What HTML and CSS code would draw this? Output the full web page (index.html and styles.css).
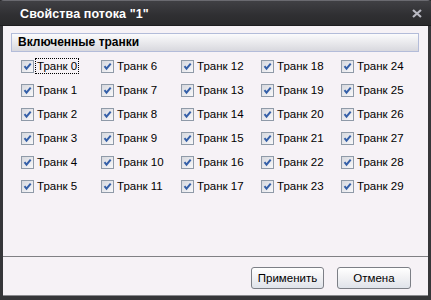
FILE: index.html
```html
<!DOCTYPE html>
<html>
<head>
<meta charset="utf-8">
<link rel="stylesheet" href="styles.css">
</head>
<body>
<div class="window">
  <div class="titlebar">
    <span class="title">Свойства потока "1"</span>
    <svg class="close" width="10" height="9" viewBox="0 0 10 9"><path d="M1 1 L9 8 M9 1 L1 8" stroke="#b9b9c2" stroke-width="2.2" fill="none"/></svg>
  </div>
  <div class="client">
    <div class="group-header">Включенные транки</div>
    <div class="grid">
      <label class="item"><span class="cb"></span><span class="lbl focus">Транк 0</span></label>
      <label class="item"><span class="cb"></span><span class="lbl">Транк 1</span></label>
      <label class="item"><span class="cb"></span><span class="lbl">Транк 2</span></label>
      <label class="item"><span class="cb"></span><span class="lbl">Транк 3</span></label>
      <label class="item"><span class="cb"></span><span class="lbl">Транк 4</span></label>
      <label class="item"><span class="cb"></span><span class="lbl">Транк 5</span></label>
      <label class="item"><span class="cb"></span><span class="lbl">Транк 6</span></label>
      <label class="item"><span class="cb"></span><span class="lbl">Транк 7</span></label>
      <label class="item"><span class="cb"></span><span class="lbl">Транк 8</span></label>
      <label class="item"><span class="cb"></span><span class="lbl">Транк 9</span></label>
      <label class="item"><span class="cb"></span><span class="lbl">Транк 10</span></label>
      <label class="item"><span class="cb"></span><span class="lbl">Транк 11</span></label>
      <label class="item"><span class="cb"></span><span class="lbl">Транк 12</span></label>
      <label class="item"><span class="cb"></span><span class="lbl">Транк 13</span></label>
      <label class="item"><span class="cb"></span><span class="lbl">Транк 14</span></label>
      <label class="item"><span class="cb"></span><span class="lbl">Транк 15</span></label>
      <label class="item"><span class="cb"></span><span class="lbl">Транк 16</span></label>
      <label class="item"><span class="cb"></span><span class="lbl">Транк 17</span></label>
      <label class="item"><span class="cb"></span><span class="lbl">Транк 18</span></label>
      <label class="item"><span class="cb"></span><span class="lbl">Транк 19</span></label>
      <label class="item"><span class="cb"></span><span class="lbl">Транк 20</span></label>
      <label class="item"><span class="cb"></span><span class="lbl">Транк 21</span></label>
      <label class="item"><span class="cb"></span><span class="lbl">Транк 22</span></label>
      <label class="item"><span class="cb"></span><span class="lbl">Транк 23</span></label>
      <label class="item"><span class="cb"></span><span class="lbl">Транк 24</span></label>
      <label class="item"><span class="cb"></span><span class="lbl">Транк 25</span></label>
      <label class="item"><span class="cb"></span><span class="lbl">Транк 26</span></label>
      <label class="item"><span class="cb"></span><span class="lbl">Транк 27</span></label>
      <label class="item"><span class="cb"></span><span class="lbl">Транк 28</span></label>
      <label class="item"><span class="cb"></span><span class="lbl">Транк 29</span></label>
    </div>
    <div class="spacer"></div>
    <div class="footer">
      <button class="btn btn-apply">Применить</button>
      <button class="btn btn-cancel">Отмена</button>
    </div>
  </div>
</div>
</body>
</html>
```

FILE: styles.css
```css
html, body {
  margin: 0;
  padding: 0;
  background: #2c2c2e;
}
.window {
  width: 431px;
  height: 300px;
  box-sizing: border-box;
  display: flex;
  flex-direction: column;
  background: #363639;
  border-radius: 4px 4px 0 0;
  border-top: 1px solid #6a6a70;
  font-family: "Liberation Sans", Arial, sans-serif;
  font-size: 11.5px;
  color: #000;
}
.titlebar {
  height: 25px;
  display: flex;
  align-items: center;
  justify-content: space-between;
  padding: 0 9px 0 20px;
  background: linear-gradient(#404044, #2f2f32 60%, #2a2a2c);
  border-bottom: 1px solid #1e1e20;
  box-sizing: border-box;
}
.title {
  color: #fff;
  font-size: 12.5px;
  font-weight: bold;
  letter-spacing: 0.1px;
  padding-top: 1px;
}
.close {
  display: block;
  margin-top: 1px;
}
.client {
  flex: 1;
  margin: 0 3px 4px 3px;
  background: #f6f2f6;
  display: flex;
  flex-direction: column;
  border-bottom: 1px solid #8a8a8e;
}
.group-header {
  margin: 7px 9px 0 8px;
  height: 19px;
  box-sizing: border-box;
  border: 1px solid #b3bcd9;
  background: linear-gradient(#fbfbfc, #e6e6ea 60%, #d8d8de);
  font-weight: bold;
  font-size: 12px;
  line-height: 17px;
  padding-left: 6px;
}
.grid {
  margin-top: 2px;
  padding-left: 18px;
  display: grid;
  grid-template-columns: repeat(5, 80px);
  grid-template-rows: repeat(6, 24px);
  grid-auto-flow: column;
}
.item {
  display: flex;
  align-items: center;
}
.cb {
  width: 13px;
  height: 13px;
  box-sizing: border-box;
  border: 1px solid #8f9aa8;
  background-color: #e4e6ea;
  background-image: url("data:image/svg+xml,%3Csvg xmlns='http://www.w3.org/2000/svg' width='11' height='11' viewBox='0 0 11 11'%3E%3Cpath d='M2.5 5.2 L4.5 7.6 L8.7 2.6' stroke='%23345fa8' stroke-width='2' fill='none'/%3E%3C/svg%3E"), linear-gradient(135deg, #d6d8de, #f8f8fa);
  background-repeat: no-repeat;
  flex: none;
}
.lbl {
  margin-left: 1px;
  padding: 0 1px;
  border: 1px solid transparent;
  line-height: 14px;
}
.lbl.focus {
  border: 1px dotted #000;
}
.spacer {
  flex: 1;
}
.footer {
  border-top: 1px solid #808084;
  height: 39px;
  box-sizing: border-box;
  display: flex;
  justify-content: flex-end;
  align-items: flex-start;
  padding: 10px 17px 0 0;
  gap: 13px;
}
.btn {
  height: 22px;
  box-sizing: border-box;
  border: 1px solid #7c7f86;
  border-radius: 3px;
  background: linear-gradient(#ffffff, #f2f2f4 45%, #dfe3ea);
  font-family: "Liberation Sans", Arial, sans-serif;
  font-size: 11.5px;
  color: #000;
  padding: 0;
}
.btn-apply { width: 73px; }
.btn-cancel { width: 74px; }
```
